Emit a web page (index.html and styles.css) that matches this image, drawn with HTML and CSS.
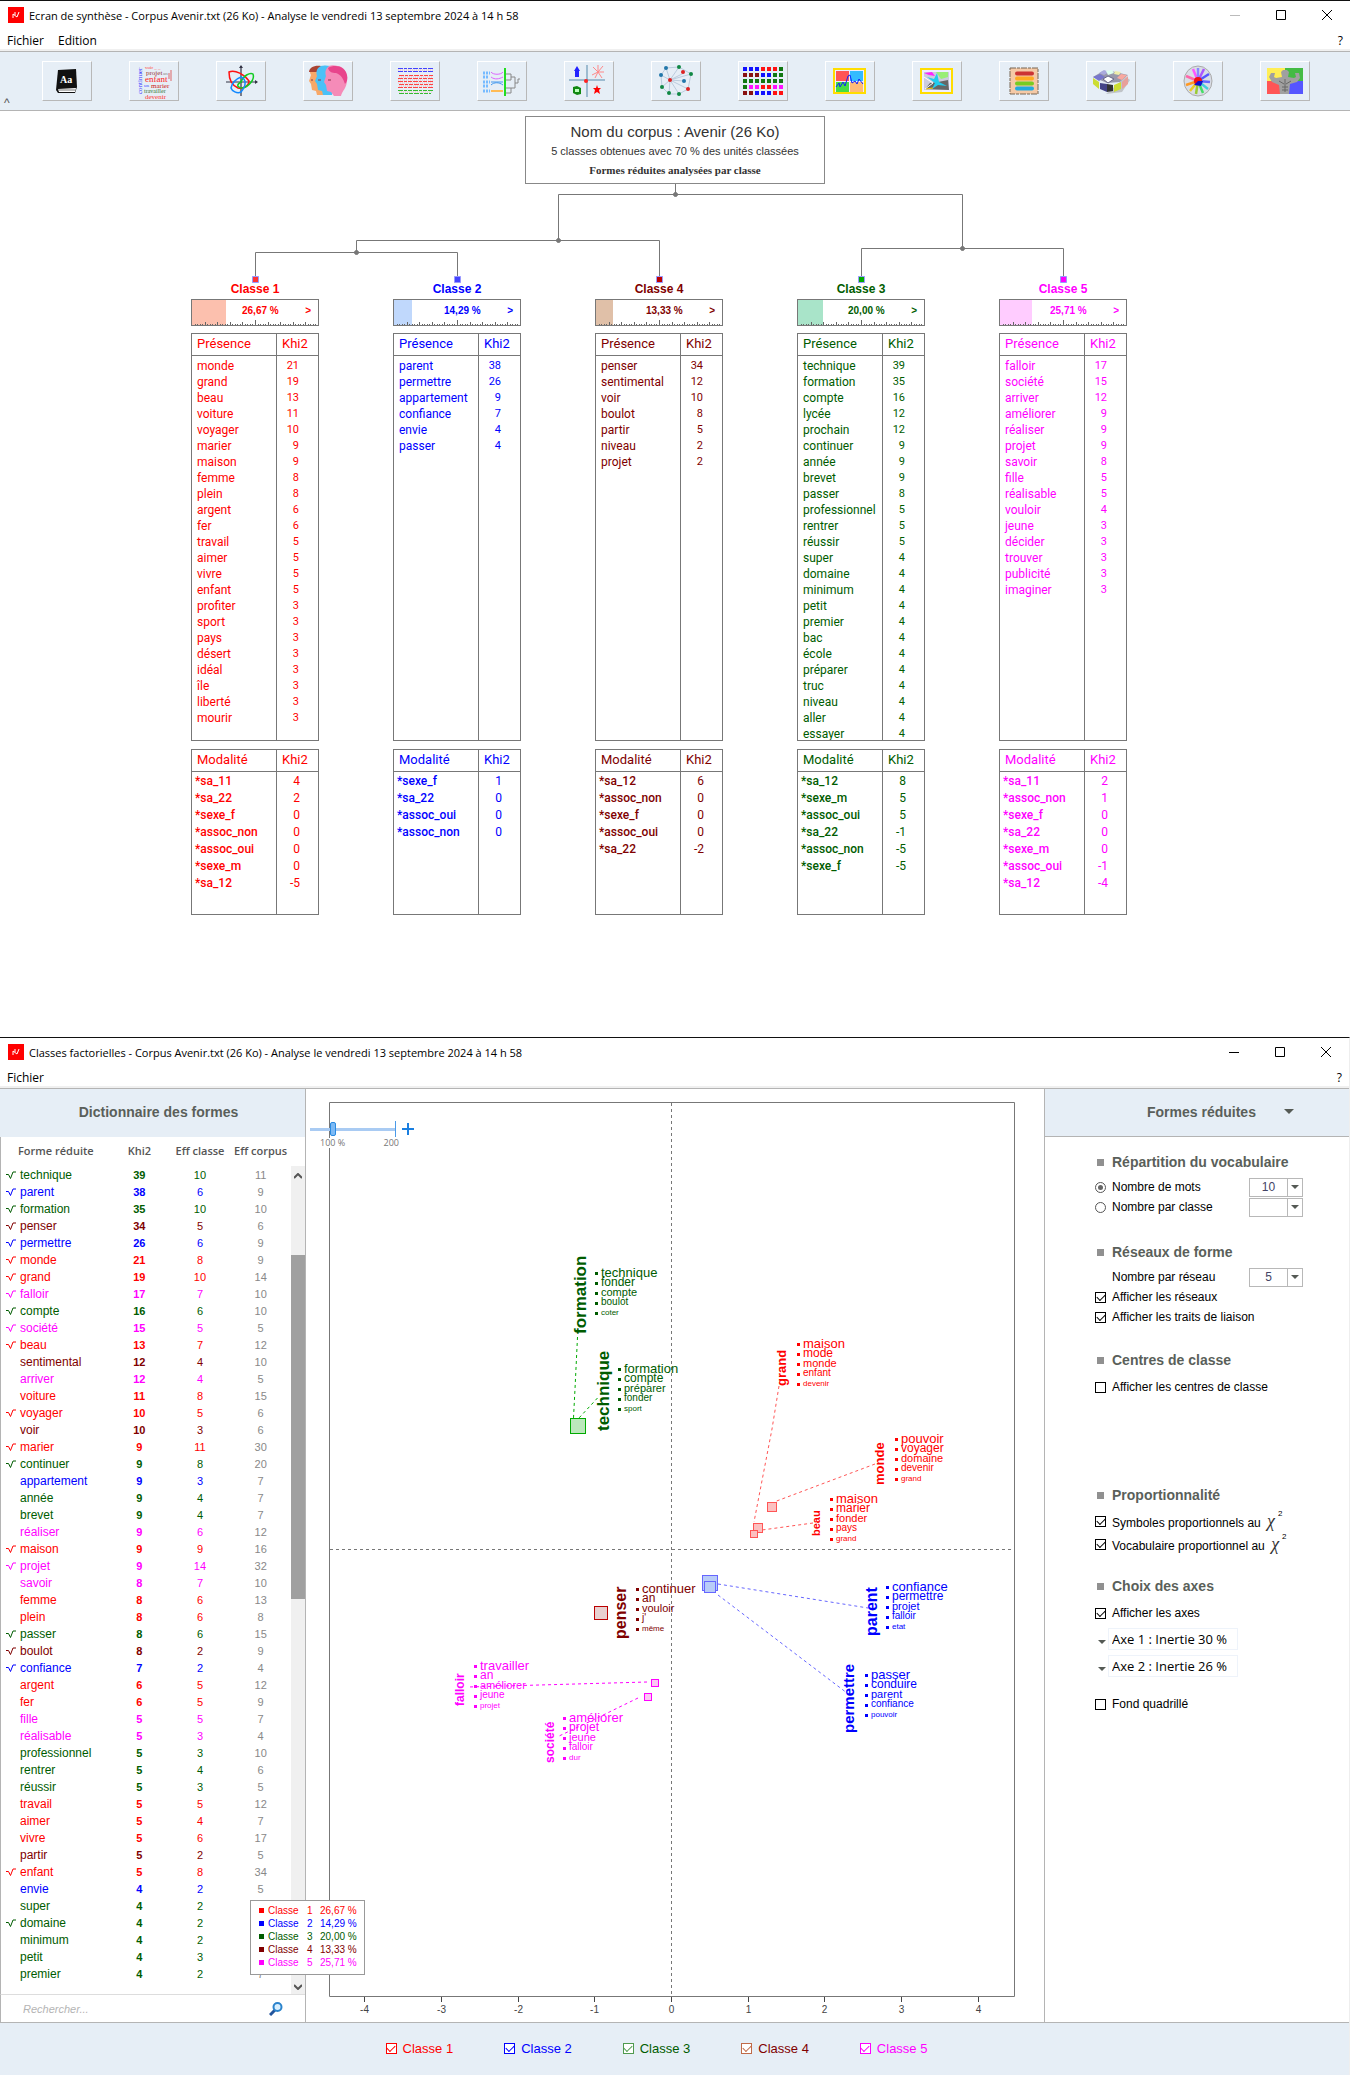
FILE: index.html
```html
<!DOCTYPE html>
<html lang="fr">
<head>
    <meta charset="UTF-8">
    <meta name="viewport" content="width=device-width, initial-scale=1.0">
    <title>Ecran de synthèse - Corpus Avenir</title>
    <link rel="stylesheet" href="styles.css">
</head>
<body>

    <section class="window synthese">
        <header class="titlebar">
            <svg class="logo" width="16" height="16"><rect width="16" height="16" fill="#f00"/><path d="M5 11V7l4 3 2-5M7 5v3" fill="none" stroke="#fff"/></svg>
            <h1>Ecran de synthèse - Corpus Avenir.txt (26 Ko) - Analyse le vendredi 13 septembre 2024 à 14 h 58</h1>
            <div class="controls">
                <button class="off" aria-label="Réduire"><svg width="10" height="10"><path d="M0 5.500h10" stroke="currentColor"/></svg></button>
                <button aria-label="Agrandir"><svg width="10" height="10"><path d="M.5.500h9v9h-9z" fill="none" stroke="currentColor"/></svg></button>
                <button aria-label="Fermer"><svg width="10" height="10"><path d="M0 0l10 10M10 0L0 10" stroke="currentColor"/></svg></button>
            </div>
        </header>
        <nav class="menu">
            <button>Fichier</button>
            <button>Edition</button>
            <button class="help">?</button>
        </nav>

        <div class="toolbar">
            <button class="collapse" aria-label="Replier">^</button>
            <!-- dictionnaire -->
            <button class="tool" aria-label="Dictionnaire"><svg viewBox="0 0 40 32">
                <path d="M11 5l18-1 1 18-2 6H11l-2-3z" fill="#111"/><path d="M11 24l18-1-1 4H12z" fill="#fff"/><path d="M11 25h17" stroke="#777"/>
                <text x="13" y="18" font-family="Liberation Serif" font-weight="bold" font-size="10" fill="#fff">Aa</text></svg></button>
            <!-- nuage de mots -->
            <button class="tool" aria-label="Nuage de mots"><svg viewBox="0 0 40 32" font-family="Liberation Serif" font-size="7">
                <text x="11" y="4" font-size="5" fill="#f33">voir _ _</text>
                <text x="12" y="10" fill="#933">projet</text><text x="29" y="10" font-size="5" fill="#888">an</text>
                <text x="11" y="17" font-size="9" fill="#f22">enfant</text>
                <text x="10" y="22" font-size="5" fill="#44f">un</text><text x="17" y="23" fill="#c22">marier</text>
                <text x="10" y="28" font-size="6" fill="#373">travailler</text>
                <text x="11" y="34" fill="#f33">devenir</text>
                <text transform="translate(8 29) rotate(-90)" fill="#33f">continuer</text>
                <path d="M37 5v11M35 8v6" stroke="#d66"/></svg></button>
            <!-- analyse factorielle -->
            <button class="tool" aria-label="Analyse factorielle"><svg viewBox="0 0 40 32" fill="none" stroke-width="1.500">
                <path d="M20 1v30M5 17h31" stroke="#334" stroke-width="1.200"/><path d="M18 3l2-3 2 3zM34 15l3 2-3 2z" fill="#334"/>
                <path d="M8 7c6-3 16 3 20 9 0 5-6 8-11 7C10 20 8 14 8 7z" stroke="#f11"/>
                <path d="M20 17c2-6 9-10 12-8 2 5-4 13-11 14-6-1-5-4-1-6z" stroke="#1c2"/>
                <path d="M20 12c5 2 6 8 0 15-4 2-9-1-10-4 1-5 5-9 10-11z" stroke="#18f"/></svg></button>
            <!-- profils -->
            <button class="tool" aria-label="Profils"><svg viewBox="0 0 40 32">
                <path d="M6 2c-4 1-5 5-3 8l-2 6 2 3 1 6 4 1 1 4h8l3-26C16 1 10 1 6 2z" fill="#f8a868"/><path d="M1 7c0-4 5-7 12-6l-2 6z" fill="#a43"/>
                <path d="M13 1c-5 2-5 7-4 10l-2 5 2 3 1 6 4 1 1 4h9l3-27c-4-3-11-3-14-2z" fill="#4ac1f7"/>
                <path d="M21 1c-4 3-4 7-3 10l-2 6 2 3 1 6 4 1 3 4h7c1-5 6-8 6-16 0-8-3-13-9-14-4-1-7-1-9 0z" fill="#f58bb8"/>
                <path d="M20 3c7-4 17-2 19 7 1 4 0 7-2 9-2-6-4-9-9-11-4 0-7-1-8-5z" fill="#e8458c"/><path d="M20 15h3M10 15h3M3 15h2" stroke="#834"/></svg></button>
            <!-- texte colorisé -->
            <button class="tool" aria-label="Concordancier"><svg viewBox="0 0 40 32" stroke-dasharray="5 1 3 1 4 1">
                <path d="M3 3.500h35M3 6.500h35" stroke="#44f"/>
                <path d="M4 10.500h34M3 13.500h35M3 16.500h35M4 19.500h34M3 22.500h35" stroke="#f44"/>
                <path d="M3 25.500h35M4 28.500h32" stroke="#3b3"/>
                <path d="M3 5h35M4 12h34M3 15h35M3 18h35M4 21h34M4 27h34" stroke="#f99" stroke-dasharray="1 1" opacity=".6"/></svg></button>
            <!-- arbre -->
            <button class="tool" aria-label="Arbre"><svg viewBox="0 0 40 32" fill="none">
                <path d="M1 8h7M1 12h6M1 17h7M1 21h6M1 26h7" stroke="#7bf" stroke-width="3" stroke-dasharray="2 1"/>
                <path d="M9 7c2 3 10 3 12 0M9 12c4 3 8 2 12 0" stroke="#d6f"/><path d="M9 17h12M9 20c3-3 8-3 12 0" stroke="#49e"/><path d="M9 26h12" stroke="#fb5" stroke-width="2"/>
                <path d="M23 3v28" stroke="#2d2" stroke-width="2"/>
                <path d="M24 9h5v6h-5M29 12h4v11h-9M33 18h3v-4h2M29 23v5h-5" stroke="#888"/></svg></button>
            <!-- correspondances -->
            <button class="tool" aria-label="Correspondances"><svg viewBox="0 0 40 32">
                <path d="M18 0v32M0 15h36" stroke="#58a"/><path d="M6 12V6H5l3-5 3 5h-1v6z" fill="#22f"/>
                <path d="M29 7l-5-5M29 7l5-6M29 7h6M29 7l-6 3M29 7l4 6M29 7l-3 6M29 7V0" stroke="#f88"/>
                <path d="M4 22l4-1 4 2v6l-4 1-4-2z" fill="#181"/><path d="M6 24h4v3H6z" fill="#bfb"/>
                <path d="M28 20l1 3h3l-2 2 1 4-3-2-3 2 1-4-2-2h3z" fill="#f00"/><circle cx="17" cy="16" r="2" fill="#f22"/></svg></button>
            <!-- réseau -->
            <button class="tool" aria-label="Réseau"><svg viewBox="0 0 40 32">
                <path d="M14 15L5 10M14 15L10 3M14 15L23 2M14 15L35 9M14 15L32 24M14 15L23 29M14 15L13 29M14 15L6 22M28 8L14 15M28 16L14 15M10 3l13-1 12 7-3 15-9 5-10 0-7-7-1-12z" fill="none" stroke="#bcd"/>
                <g fill="#184"><circle cx="23" cy="2" r="2"/><circle cx="35" cy="9" r="2"/><circle cx="23" cy="29" r="2"/><circle cx="6" cy="22" r="2"/><circle cx="13" cy="28" r="2"/></g>
                <g fill="#27a"><circle cx="10" cy="3" r="2"/><circle cx="5" cy="10" r="2"/><circle cx="28" cy="16" r="2"/></g>
                <g fill="#d22"><circle cx="14" cy="15" r="2"/><circle cx="27" cy="7" r="2"/><circle cx="32" cy="24" r="2"/></g></svg></button>
            <!-- mosaïque -->
            <button class="tool" aria-label="Mosaïque"><svg viewBox="0 0 40 32" stroke-width="4" stroke-dasharray="4 2">
                <path d="M0 4h17" stroke="#11f"/><path d="M18 4h17" stroke="#f11"/><path d="M36 4h4" stroke="#171"/>
                <path d="M0 10h17" stroke="#811"/><path d="M18 10h11" stroke="#11f"/><path d="M30 10h10" stroke="#171"/>
                <path d="M0 16h40" stroke="#171"/>
                <path d="M0 22h4" stroke="#171"/><path d="M6 22h11M30 22h10" stroke="#f1f"/><path d="M18 22h11" stroke="#f11"/>
                <path d="M0 28h11" stroke="#811"/><path d="M12 28h17" stroke="#11f"/><path d="M30 28h10" stroke="#f11"/></svg></button>
            <!-- chronologie -->
            <button class="tool" aria-label="Chronologie"><svg viewBox="0 0 40 32">
                <path d="M4 4h31v24H4z" fill="#eef" stroke="#fd0" stroke-width="2"/><path d="M6 6h13v10H6z" fill="#f55"/><path d="M20 6h13v10H20z" fill="#3bf"/><path d="M6 17h13v10H6z" fill="#4d4"/><path d="M20 17h13v10H20z" fill="#fb7"/>
                <path d="M6 22l3-4 1 4 3-5 2 4 3-10 2-1 2 8 3-2 2 3 2-5 4 5" fill="none" stroke="#12f"/></svg></button>
            <!-- carte -->
            <button class="tool" aria-label="Carte"><svg viewBox="0 0 40 32">
                <path d="M4 4h31v24H4z" fill="#eef" stroke="#fd0" stroke-width="2"/><path d="M7 7h25v18H7z" fill="#ccd"/><path d="M7 8l8-1 3 4-6-1z" fill="#f2f"/><path d="M19 7h12v5l-7 2z" fill="#9e7"/><path d="M8 24l5-6 8-1 10-2 1 10z" fill="#666"/><path d="M20 8l2 9 8 4-9-1-6 4 3-6-8-6 7 2z" fill="#2ce"/><path d="M9 24l7-1" stroke="#fc0"/><path d="M7 12l9 6-8 6" fill="none" stroke="#fff"/></svg></button>
            <!-- parchemin -->
            <button class="tool" aria-label="Segments"><svg viewBox="0 0 40 32">
                <path d="M6 3h28v26H6z" fill="#f5c9a6"/><path d="M6 3h28v26H6z" fill="none" stroke="#765" stroke-dasharray="6 1 3 1"/><g stroke-width="4" stroke-linecap="round"><path d="M13 8.500h15" stroke="#c33"/><path d="M13 13.500h15" stroke="#fa2"/><path d="M13 18.500h15" stroke="#7c2"/><path d="M13 23.500h15" stroke="#2ad"/></g></svg></button>
            <!-- cubes -->
            <button class="tool" aria-label="Tri croisé"><svg viewBox="0 0 40 32">
                <path d="M15 29l16-2 8-12-4-3z" fill="#999" opacity=".5"/>
                <path d="M2 12l10-6 4 2 4-2 17 4-8 7-13 1z" fill="#99a"/><path d="M2 12l7-3 5 3-6 4z" fill="#77c"/><path d="M8 8l5-3 5 2-5 3z" fill="#aad"/><path d="M15 6l6-1 2 3-6 2z" fill="#dfe"/><path d="M24 6l6 1-2 3-5-1z" fill="#eea"/><path d="M30 9l6 1-5 5-5-2z" fill="#f9a9a0"/>
                <path d="M2 13l6 4v7l-6-5zM23 20l7-3v7l-7 3z" fill="#cd3"/><path d="M9 18l7 1v8l-7-3z" fill="#448"/><path d="M16 19l6 1v6l-6 1z" fill="#333"/><path d="M31 17l6-6v8l-6 5z" fill="#e8a09a"/><path d="M12 14l5-3 6 3-6 4z" fill="#fff" stroke="#668"/></svg></button>
            <!-- disque -->
            <button class="tool" aria-label="Disque"><svg viewBox="0 0 40 32">
                <ellipse cx="20" cy="16" rx="14" ry="15" fill="#d9dde6" stroke="#aaa"/>
                <g stroke-width="2.500"><path d="M20 16L15 4" stroke="#f5f"/><path d="M20 16V3" stroke="#88f"/><path d="M20 16l6-12" stroke="#a5f"/><path d="M20 16l11-7" stroke="#55f"/><path d="M20 16l12 1" stroke="#66f"/><path d="M20 16l10 8" stroke="#4cd"/><path d="M20 16l5 12" stroke="#4d6"/><path d="M20 16l-2 13" stroke="#9c3"/><path d="M20 16l-8 10" stroke="#ec2"/><path d="M20 16L8 20" stroke="#f92"/><path d="M20 16L8 11" stroke="#f6a"/></g>
                <circle cx="20" cy="16" r="4" fill="#e11"/><path d="M20 16h5l-2 5-7-1z" fill="#11c"/></svg></button>
            <!-- athlète -->
            <button class="tool" aria-label="Poids"><svg viewBox="0 0 40 32">
                <path d="M2 3h18v13H2z" fill="#fe5"/><path d="M20 3h18v13H20z" fill="#4b4"/><path d="M2 16h18v13H2z" fill="#f55"/><path d="M20 16h18v13H20z" fill="#55f"/>
                <path d="M6 8l4 0-1 4 2 1 6-1-1-5 2-2h4l2 2-1 5 6 1 2-1-1-4 4 0 1 5-3 4-7 2-1 10h-9l-1-9-7-3-3-5z" fill="#a0a0a0"/><path d="M20 14v13M14 16l5 3M26 16l-5 3M17 22h6M17 25h6" stroke="#666"/></svg></button>
        </div>

        <main class="synthese-body">
            <div class="corpus">
                <p class="corpus-name">Nom du corpus : Avenir (26 Ko)</p>
                <p class="corpus-info">5 classes obtenues avec 70 % des unités classées</p>
                <p class="corpus-mode">Formes réduites analysées par classe</p>
            </div>
            <div class="tree">
                <svg class="branches" width="936" height="100" fill="none" stroke="#777">
                    <path d="M484.500 0V10.500M367.500 56V10.500H771.500V64M165.500 68V56.500H468.500V92M64.500 92V68.500H266.500V92M670.500 92V64.500H872.500V92"/>
                    <g fill="#777"><circle cx="484.500" cy="10.500" r="2"/><circle cx="367.500" cy="56.500" r="2"/><circle cx="165.500" cy="68.500" r="2"/><circle cx="771.500" cy="64.500" r="2"/></g>
                    <g stroke="#99f"><path fill="#f33" d="M61.500 92.500h6v6h-6z"/><path fill="#44f" d="M263.500 92.500h6v6h-6z"/><path fill="#b00" d="M465.500 92.500h6v6h-6z"/><path fill="#0a0" d="M667.500 92.500h6v6h-6z"/><path fill="#f0f" d="M869.500 92.500h6v6h-6z"/></g>
                </svg>
                <div class="classes" id="classes"></div>
            </div>
        </main>
    </section>

    <section class="window factorielle">
        <header class="titlebar">
            <svg class="logo" width="16" height="16"><rect width="16" height="16" fill="#f00"/><path d="M5 11V7l4 3 2-5M7 5v3" fill="none" stroke="#fff"/></svg>
            <h1>Classes factorielles - Corpus Avenir.txt (26 Ko) - Analyse le vendredi 13 septembre 2024 à 14 h 58</h1>
            <div class="controls">
                <button aria-label="Réduire"><svg width="10" height="10"><path d="M0 5.500h10" stroke="currentColor"/></svg></button>
                <button aria-label="Agrandir"><svg width="10" height="10"><path d="M.5.500h9v9h-9z" fill="none" stroke="currentColor"/></svg></button>
                <button aria-label="Fermer"><svg width="10" height="10"><path d="M0 0l10 10M10 0L0 10" stroke="currentColor"/></svg></button>
            </div>
        </header>
        <nav class="menu">
            <button>Fichier</button>
            <button class="help">?</button>
        </nav>

        <div class="panels">
            <aside class="dico">
                <h2>Dictionnaire des formes</h2>
                <div class="dico-body">
                    <table class="dico-table">
                        <thead><tr><th>Forme réduite</th><th>Khi2</th><th>Eff classe</th><th>Eff corpus</th></tr></thead>
                        <tbody id="formes"></tbody>
                    </table>
                    <div class="scrollbar">
                        <svg width="8" height="6"><path d="M0 5l4-4 4 4" fill="none" stroke="#555" stroke-width="2"/></svg>
                        <div class="thumb"></div>
                        <svg width="8" height="6"><path d="M0 1l4 4 4-4" fill="none" stroke="#555" stroke-width="2"/></svg>
                    </div>
                </div>
                <div class="search">
                    <input type="text" placeholder="Rechercher..." aria-label="Rechercher">
                    <svg width="14" height="14"><path d="M1 13l5-5" stroke="#23559c" stroke-width="3"/><circle cx="8.500" cy="5" r="4" fill="#d8efff" stroke="#2a83cc" stroke-width="2"/></svg>
                </div>
            </aside>

            <div class="plan">
                <svg id="plan" width="738" height="933"></svg>
                <div class="zoom">
                    <div class="zoom-line">
                        <input type="range" min="65" max="200" value="100" aria-label="Zoom">
                        <svg width="12" height="12"><path d="M6 0v12M0 6h12" stroke="#1a7fe0" stroke-width="2"/></svg>
                    </div>
                    <div class="zoom-text"><span>100 %</span><span>200</span></div>
                </div>
            </div>

            <aside class="options">
                <div class="options-head">
                    <select aria-label="Type de formes"><option>Formes réduites</option></select>
                    <i class="arrow"></i>
                </div>
                <form>
                    <fieldset>
                        <h3>Répartition du vocabulaire</h3>
                        <div class="row">
                            <input type="radio" name="rep" id="mots" checked><label for="mots">Nombre de mots</label>
                            <span class="combo"><select aria-label="Nombre de mots"><option>10</option></select><i class="arrow"></i></span>
                        </div>
                        <div class="row">
                            <input type="radio" name="rep" id="parclasse"><label for="parclasse">Nombre par classe</label>
                            <span class="combo"><select aria-label="Nombre par classe"><option></option></select><i class="arrow"></i></span>
                        </div>
                    </fieldset>
                    <fieldset>
                        <h3>Réseaux de forme</h3>
                        <div class="row indent">
                            <label for="reseau">Nombre par réseau</label>
                            <span class="combo"><select id="reseau"><option>5</option></select><i class="arrow"></i></span>
                        </div>
                        <div class="row"><input type="checkbox" id="reseaux" checked><label for="reseaux">Afficher les réseaux</label></div>
                        <div class="row"><input type="checkbox" id="traits" checked><label for="traits">Afficher les traits de liaison</label></div>
                    </fieldset>
                    <fieldset class="centres">
                        <h3>Centres de classe</h3>
                        <div class="row"><input type="checkbox" id="centres"><label for="centres">Afficher les centres de classe</label></div>
                    </fieldset>
                    <fieldset class="proportion">
                        <h3>Proportionnalité</h3>
                        <div class="row"><input type="checkbox" id="symb" checked><label for="symb">Symboles proportionnels au <em>χ</em><sup>2</sup></label></div>
                        <div class="row"><input type="checkbox" id="voc" checked><label for="voc">Vocabulaire proportionnel au <em>χ</em><sup>2</sup></label></div>
                    </fieldset>
                    <fieldset class="axes">
                        <h3>Choix des axes</h3>
                        <div class="row"><input type="checkbox" id="axes" checked><label for="axes">Afficher les axes</label></div>
                        <div class="axe"><i class="arrow"></i><select aria-label="Axe horizontal"><option>Axe 1 : Inertie 30 %</option></select></div>
                        <div class="axe"><i class="arrow"></i><select aria-label="Axe vertical"><option>Axe 2 : Inertie 26 %</option></select></div>
                    </fieldset>
                    <fieldset class="fond">
                        <div class="row"><input type="checkbox" id="fond"><label for="fond">Fond quadrillé</label></div>
                    </fieldset>
                </form>
            </aside>

            <div class="legend" id="legend"></div>
        </div>

        <footer class="filters">
            <label class="c1"><input type="checkbox" checked>Classe 1</label>
            <label class="c2"><input type="checkbox" checked>Classe 2</label>
            <label class="c3"><input type="checkbox" checked>Classe 3</label>
            <label class="c4"><input type="checkbox" checked>Classe 4</label>
            <label class="c5"><input type="checkbox" checked>Classe 5</label>
        </footer>
    </section>

    <script src="script.js"></script>
</body>
</html>
```
FILE: styles.css
```css
* {
    box-sizing: border-box;
}

body {
    margin: 0;
    background: #fff;
    color: #000;
    font-family: "Liberation Sans", Arial, sans-serif;
    font-size: 12px;
}

h1, h2, h3, p {
    margin: 0;
}

button, select, input {
    font: inherit;
    color: inherit;
    margin: 0;
}

.c1 { color: #ff0000; }
.c2 { color: #0000ff; }
.c3 { color: #005c00; }
.c4 { color: #800000; }
.c5 { color: #ff00ff; }

/* fenêtres */
.window {
    border-top: 1px solid #111;
}

.titlebar {
    display: flex;
    align-items: center;
    height: 28px;
    padding-left: 8px;
}

.titlebar h1 {
    flex: 1;
    margin-left: 5px;
    font: 11px "Open Sans", sans-serif;
}

.controls {
    display: flex;
}

.controls button {
    width: 46px;
    height: 28px;
    padding: 0;
    border: none;
    background: none;
}

.controls svg {
    display: block;
    margin: auto;
}

.controls .off {
    color: #bbb;
}

.menu {
    display: flex;
    gap: 14px;
    height: 22px;
    padding: 3px 7px 0;
    border-bottom: 2px solid #f0f0f0;
}

.menu button {
    padding: 0;
    border: none;
    background: none;
    font: 12px/17px "Open Sans", sans-serif;
}

.menu .help {
    margin-left: auto;
}

.toolbar {
    position: relative;
    display: flex;
    justify-content: space-between;
    align-items: center;
    height: 60px;
    padding: 0 40px 0 42px;
    background: #e6eef6;
    border-top: 1px solid #b4b4b4;
    border-bottom: 1px solid #b4b4b4;
}

.collapse {
    position: absolute;
    left: 4px;
    bottom: 0;
    padding: 0;
    border: none;
    background: none;
    color: #555;
}

.tool {
    width: 50px;
    height: 40px;
    padding: 0;
    background: #e6eef6;
    border: 1px solid;
    border-color: #fff #b8b8b8 #b8b8b8 #fff;
}

.tool svg {
    display: block;
    width: 40px;
    height: 32px;
    margin: auto;
    overflow: visible;
}

/* dendrogramme */
.synthese-body {
    padding: 5px 0 122px;
}

.corpus {
    width: 300px;
    height: 68px;
    margin: 0 auto;
    padding-top: 5px;
    border: 1px solid #888;
    text-align: center;
    color: #333;
}

.corpus-name {
    font-size: 15px;
    line-height: 20px;
}

.corpus-info {
    font-size: 11px;
    line-height: 18px;
}

.corpus-mode {
    font: bold 11px/20px "Liberation Serif", serif;
}

.tree {
    width: 936px;
    margin: 0 auto;
    position: relative;
    right: 16px;
}

.branches {
    display: block;
}

.classes {
    display: flex;
    justify-content: space-between;
}

.classe {
    width: 128px;
}

.classe h2 {
    font-size: 12px;
    line-height: 10px;
    height: 15px;
    text-align: center;
}

.gauge {
    display: flex;
    align-items: center;
    justify-content: space-between;
    position: relative;
    height: 27px;
    margin-bottom: 7px;
    padding: 0 7px 4px 50px;
    border: 1px solid #777;
    font-size: 10px;
    font-weight: bold;
}

.gauge .part {
    position: absolute;
    left: 0;
    top: 0;
    bottom: 0;
}

.gauge .ticks {
    position: absolute;
    left: 0;
    bottom: 0;
}

.gauge b {
    position: relative;
}

.c1 .part { background: #fcc0ae; }
.c2 .part { background: #c0d8fc; }
.c3 .part { background: #a9e4c9; }
.c4 .part { background: #e0c0a8; }
.c5 .part { background: #ffccff; }

.box {
    height: 408px;
    margin-bottom: 8px;
    border: 1px solid #777;
    overflow: hidden;
    background: linear-gradient(#777, #777) 84px 0 / 1px 100% no-repeat;
}

.box table {
    width: 100%;
    table-layout: fixed;
    border-spacing: 0;
    font-family: Roboto, sans-serif;
}

.box th {
    height: 22px;
    padding: 0 0 2px 5px;
    border-bottom: 1px solid #777;
    font-size: 13px;
    font-weight: normal;
    line-height: 16px;
    text-align: left;
}

.box th:last-child {
    width: 41px;
    padding-left: 5px;
}

.box td {
    padding: 0 0 0 5px;
    line-height: 16px;
    white-space: nowrap;
}

.box td:last-child {
    padding: 0 19px 0 0;
    font-size: 11px;
    text-align: right;
}

.box tbody::before {
    content: "";
    display: block;
    height: 2px;
}

.box.modalite {
    height: 166px;
    margin: 0;
}

.modalite tbody::before {
    height: 1px;
}

.modalite td {
    padding-left: 3px;
    line-height: 17px;
    font-weight: 500;
}

.modalite td:last-child {
    padding-right: 18px;
    font-size: 12px;
    font-weight: normal;
}

/* plan factoriel */
.factorielle {
    border-right: 1px solid #eee;
}

.panels {
    display: grid;
    grid-template-columns: 306px 1fr 305px;
    position: relative;
    border-top: 1px solid #b4b4b4;
}

.dico {
    display: flex;
    flex-direction: column;
    border-right: 1px solid #b4b4b4;
}

.dico h2 {
    height: 48px;
    padding-left: 12px;
    background: #e6eef6;
    color: #5a5f5a;
    font-size: 14px;
    line-height: 47px;
    text-align: center;
}

.dico-body {
    display: flex;
    flex: 1;
    border-left: 1px solid #b4b4b4;
}

.dico-table {
    width: 290px;
    table-layout: fixed;
    border-spacing: 0;
    align-self: flex-start;
}

.dico-table th {
    height: 30px;
    padding: 0 0 3px;
    color: #555;
    font: 600 11px "Open Sans", sans-serif;
}

.dico-table th:first-child {
    width: 108px;
    padding-left: 17px;
    text-align: left;
}

.dico-table td {
    height: 17px;
    padding: 0;
    font-size: 11px;
    line-height: 17px;
    text-align: center;
}

.dico-table td:first-child {
    padding-left: 19px;
    font-size: 12px;
    text-align: left;
}

.dico-table td.marked {
    padding-left: 5px;
}

.dico-table svg {
    margin-right: 4px;
}

.dico-table td:nth-child(2) {
    font-weight: bold;
}

.dico-table td:last-child {
    color: #888;
}

.scrollbar {
    display: flex;
    flex-direction: column;
    justify-content: space-between;
    align-items: center;
    flex: 1;
    margin-top: 29px;
    padding: 7px 0 4px;
    background: #f0f0f0;
}

.thumb {
    width: 100%;
    height: 344px;
    margin: 76px 0 auto;
    background: #a0a0a0;
}

.search {
    display: flex;
    align-items: center;
    height: 28px;
    padding: 0 22px;
    border-left: 1px solid #b4b4b4;
    border-top: 1px solid #ddd;
}

.search input {
    flex: 1;
    min-width: 0;
    padding: 0;
    border: none;
    font-size: 11px;
    font-style: italic;
}

.search input::placeholder {
    color: #b4b4b4;
}

.plan {
    position: relative;
}

.plan > svg {
    display: block;
    width: 100%;
}

/* curseur de zoom posé sur le cadre */
.zoom {
    position: absolute;
    left: 4px;
    top: 31px;
    width: 104px;
}

.zoom-line {
    display: flex;
    align-items: center;
    gap: 6px;
    height: 18px;
}

.zoom input {
    flex: 1;
    min-width: 0;
    height: 16px;
    appearance: none;
    border-right: 1px solid #4a9ae8;
    background: linear-gradient(#a9cbf3, #a9cbf3) 0 50% / 100% 3px no-repeat;
}

.zoom input::-webkit-slider-thumb {
    appearance: none;
    width: 6px;
    height: 14px;
    border: 1px solid #2a8ae0;
    border-radius: 2px;
    background: #7dbaf5;
}

.zoom-text {
    display: flex;
    justify-content: space-between;
    padding: 0 15px 0 10px;
    color: #777;
    font: 9px/10px "Open Sans", sans-serif;
}

.zoom-text span {
    background: #fff;
}

/* options */
.options {
    border-left: 1px solid #b4b4b4;
}

.arrow {
    border: 5px solid transparent;
    border-top-color: #555a55;
    border-bottom: none;
}

.options-head {
    display: flex;
    align-items: center;
    gap: 28px;
    height: 48px;
    padding: 0 0 2px 102px;
    background: #e6eef6;
    border-bottom: 1px solid #b4b4b4;
}

.options select {
    appearance: none;
    border: none;
    padding: 0;
    background: none;
}

.options-head select {
    color: #5a5f5a;
    font-size: 14px;
    font-weight: bold;
}

.options form {
    padding: 15px 46px 0 50px;
}

fieldset {
    margin: 0 0 25px;
    padding: 0;
    border: none;
}

.options h3 {
    display: flex;
    align-items: center;
    gap: 8px;
    margin-bottom: 5px;
    padding-left: 2px;
    color: #5a5f5a;
    font-size: 14px;
    line-height: 20px;
}

.options h3::before {
    content: "";
    width: 7px;
    height: 7px;
    background: #909090;
}

.row {
    display: flex;
    align-items: center;
    gap: 6px;
    height: 20px;
}

.indent {
    padding-left: 17px;
}

input[type="checkbox"], input[type="radio"] {
    display: grid;
    place-content: center;
    flex: none;
    width: 11px;
    height: 11px;
    appearance: none;
    border: 1px solid currentColor;
    background: #fff;
}

input[type="checkbox"]:checked::after {
    content: "";
    width: 7px;
    height: 4px;
    margin-bottom: 2px;
    border: solid currentColor;
    border-width: 0 0 1px 1px;
    transform: rotate(-45deg);
}

input[type="radio"] {
    border-color: #555;
    border-radius: 50%;
}

input[type="radio"]:checked::after {
    content: "";
    width: 5px;
    height: 5px;
    border-radius: 50%;
    background: #666;
}

.combo {
    display: flex;
    align-items: center;
    width: 54px;
    height: 19px;
    margin-left: auto;
    border: 1px solid #b8b8b8;
}

.combo select {
    width: 38px;
    height: 17px;
    border-right: 1px solid #b8b8b8;
    color: #446;
    text-align: center;
    text-align-last: center;
}

.combo .arrow, .axe .arrow {
    margin: 0 auto;
    border-width: 4px 4px 0;
}

.centres {
    margin-top: -2px;
    margin-bottom: 88px;
}

.centres h3, .axes h3 {
    margin-bottom: 7px;
}

.proportion {
    margin-bottom: 20px;
}

.proportion .row {
    height: 23px;
}

.proportion em {
    margin-left: 3px;
    color: #333;
    font: italic 18px/12px "Liberation Serif", serif;
}

.proportion sup {
    margin-left: 3px;
    font-size: 8px;
    line-height: 0;
    vertical-align: 11px;
}

.axes {
    margin-bottom: 17px;
}

.axe {
    display: flex;
    align-items: center;
    height: 22px;
    margin-top: 5px;
}

.axe .arrow {
    margin: 5px 2px 0 3px;
}

.axe select {
    width: 130px;
    height: 22px;
    padding-left: 3px;
    border: 1px solid #eef3fa;
    font-family: "Open Sans", sans-serif;
    font-size: 13px;
}

.legend {
    position: absolute;
    left: 250px;
    top: 811px;
    width: 115px;
    height: 75px;
    padding: 3px 8px;
    border: 1px solid #999;
    background: #fff;
    font-size: 10px;
    white-space: nowrap;
}

.legend div {
    display: grid;
    grid-template-columns: 9px 39px 13px 36px;
    align-items: center;
    height: 13px;
}

.legend i {
    width: 5px;
    height: 5px;
    background: currentColor;
}

.filters {
    display: flex;
    justify-content: center;
    gap: 51px;
    height: 53px;
    padding: 0 36px 2px 0;
    background: #e6eef6;
    border-top: 1px solid #b4b4b4;
    font-size: 13px;
}

.filters label {
    display: flex;
    align-items: center;
    gap: 6px;
}

.filters .c3 input { color: #4f9a4f; }
.filters .c4 input { color: #c06a48; }
```
FILE: script.js
```
// Classes dans l'ordre de l'arbre
const classes = [
    { n: 1, pct: "26,67", presence: "monde 21,grand 19,beau 13,voiture 11,voyager 10,marier 9,maison 9,femme 8,plein 8,argent 6,fer 6,travail 5,aimer 5,vivre 5,enfant 5,profiter 3,sport 3,pays 3,désert 3,idéal 3,île 3,liberté 3,mourir 3",
      modalite: "*sa_11 4,*sa_22 2,*sexe_f 0,*assoc_non 0,*assoc_oui 0,*sexe_m 0,*sa_12 -5" },
    { n: 2, pct: "14,29", presence: "parent 38,permettre 26,appartement 9,confiance 7,envie 4,passer 4",
      modalite: "*sexe_f 1,*sa_22 0,*assoc_oui 0,*assoc_non 0" },
    { n: 4, pct: "13,33", presence: "penser 34,sentimental 12,voir 10,boulot 8,partir 5,niveau 2,projet 2",
      modalite: "*sa_12 6,*assoc_non 0,*sexe_f 0,*assoc_oui 0,*sa_22 -2" },
    { n: 3, pct: "20,00", presence: "technique 39,formation 35,compte 16,lycée 12,prochain 12,continuer 9,année 9,brevet 9,passer 8,professionnel 5,rentrer 5,réussir 5,super 4,domaine 4,minimum 4,petit 4,premier 4,bac 4,école 4,préparer 4,truc 4,niveau 4,aller 4,essayer 4",
      modalite: "*sa_12 8,*sexe_m 5,*assoc_oui 5,*sa_22 -1,*assoc_non -5,*sexe_f -5" },
    { n: 5, pct: "25,71", presence: "falloir 17,société 15,arriver 12,améliorer 9,réaliser 9,projet 9,savoir 8,fille 5,réalisable 5,vouloir 4,jeune 3,décider 3,trouver 3,publicité 3,imaginer 3",
      modalite: "*sa_11 2,*assoc_non 1,*sexe_f 0,*sa_22 0,*sexe_m 0,*assoc_oui -1,*sa_12 -4" }
];

function box(type, title, list) {
    const rows = list.split(",").map(item => {
        const [mot, khi] = item.split(" ");
        return `<tr><td>${mot}</td><td>${khi}</td></tr>`;
    }).join("");
    return `<div class="box ${type}"><table><thead><tr><th>${title}</th><th>Khi2</th></tr></thead><tbody>${rows}</tbody></table></div>`;
}

// Graduations sous la jauge : une tous les 2 %, plus haute à 10 % et à 50 %
let ticks = "";
for (let i = 1; i < 50; i++) {
    const h = i === 25 ? 5 : i % 5 === 0 ? 3 : 1;
    ticks += `M${Math.round(i * 126 / 50) + 0.5} 5v-${h}`;
}

document.getElementById("classes").innerHTML = classes.map(c => `
    <div class="classe c${c.n}">
        <h2>Classe ${c.n}</h2>
        <div class="gauge">
            <div class="part" style="width: ${c.pct.replace(",", ".")}%"></div>
            <svg class="ticks" width="126" height="5"><path d="${ticks}" stroke="#666"/></svg>
            <b>${c.pct} %</b><b>&gt;</b>
        </div>
        ${box("presence", "Présence", c.presence)}
        ${box("modalite", "Modalité", c.modalite)}
    </div>`).join("");

// Dictionnaire : forme, classe, khi2, effectif classe, effectif corpus, √ si affichée sur le plan
const formes = `technique 3 39 10 11 √,parent 2 38 6 9 √,formation 3 35 10 10 √,penser 4 34 5 6 √,permettre 2 26 6 9 √,monde 1 21 8 9 √
grand 1 19 10 14 √,falloir 5 17 7 10 √,compte 3 16 6 10 √,société 5 15 5 5 √,beau 1 13 7 12 √,sentimental 4 12 4 10
arriver 5 12 4 5,voiture 1 11 8 15,voyager 1 10 5 6 √,voir 4 10 3 6,marier 1 9 11 30 √,continuer 3 9 8 20 √
appartement 2 9 3 7,année 3 9 4 7,brevet 3 9 4 7,réaliser 5 9 6 12,maison 1 9 9 16 √,projet 5 9 14 32 √
savoir 5 8 7 10,femme 1 8 6 13,plein 1 8 6 8,passer 3 8 6 15 √,boulot 4 8 2 9 √,confiance 2 7 2 4 √
argent 1 6 5 12,fer 1 6 5 9,fille 5 5 5 7,réalisable 5 5 3 4,professionnel 3 5 3 10,rentrer 3 5 4 6
réussir 3 5 3 5,travail 1 5 5 12,aimer 1 5 4 7,vivre 1 5 6 17,partir 4 5 2 5,enfant 1 5 8 34 √
envie 2 4 2 5,super 3 4 2 6,domaine 3 4 2 7 √,minimum 3 4 2 5,petit 3 4 3 9,premier 3 4 2 7`;

const coche = '<svg width="10" height="8"><path d="M0 3.500h2.500l2 4 2.500-6.500h3" fill="none" stroke="currentColor"/></svg>';

document.getElementById("formes").innerHTML = formes.split(/[,\n]/).map(item => {
    const [mot, n, khi, classe, corpus, vu] = item.split(" ");
    return `<tr class="c${n}"><td${vu ? ' class="marked"' : ""}>${vu ? coche : ""}${mot}</td><td>${khi}</td><td>${classe}</td><td>${corpus}</td></tr>`;
}).join("");

document.getElementById("legend").innerHTML = [...classes].sort((a, b) => a.n - b.n).map(c =>
    `<div class="c${c.n}"><i></i><span>Classe</span><span>${c.n}</span><span>${c.pct} %</span></div>`).join("");

// Plan factoriel : mot vertical (x, y de départ, corps) puis son réseau (x, y de la première puce)
const mots = [
    { mot: "formation", n: 3, x: 280, y: 245, size: 17, lx: 289, ly: 184, reseau: "technique fonder compte boulot coter" },
    { mot: "technique", n: 3, x: 303, y: 342, size: 17, lx: 312, ly: 280, reseau: "formation compte préparer fonder sport" },
    { mot: "grand", n: 1, x: 480, y: 297, size: 13, lx: 491, ly: 255, reseau: "maison mode monde enfant devenir" },
    { mot: "monde", n: 1, x: 578, y: 396, size: 13, lx: 589, ly: 350, reseau: "pouvoir voyager domaine devenir grand" },
    { mot: "beau", n: 1, x: 514, y: 447, size: 11, lx: 524, ly: 410, reseau: "maison marier fonder pays grand" },
    { mot: "penser", n: 4, x: 320, y: 550, size: 16, lx: 330, ly: 500, reseau: "continuer an vouloir j' même" },
    { mot: "parent", n: 2, x: 571, y: 547, size: 16, lx: 580, ly: 498, reseau: "confiance permettre projet falloir etat" },
    { mot: "permettre", n: 2, x: 548, y: 644, size: 15, lx: 559, ly: 586, reseau: "passer conduire parent confiance pouvoir" },
    { mot: "falloir", n: 5, x: 158, y: 617, size: 12, lx: 168, ly: 577, reseau: "travailler an améliorer jeune projet" },
    { mot: "société", n: 5, x: 248, y: 674, size: 12, lx: 257, ly: 629, reseau: "améliorer projet jeune falloir dur" }
];
const corps = [13, 12, 11, 10, 8];
const base = [4, 13, 23, 32, 42];

const traits = [
    ["#0a0", "M271.500 248L269 300 267.500 329M291.500 309L273 329"],
    ["#f55", "M473 297L466 340 448 433M569 375L468 413M507 434L456 441"],
    ["#66f", "M412 495L562 519M412 506L541 604"],
    ["#f0f", "M341 593L162 598M332 609L287 631 251 648"]
];
const symboles = [
    [264, 329, 15, "#0a0", "#bbe8bb"], [461, 413, 9, "#f55", "#fcc0c0"], [447, 434, 9, "#f55", "#fcc0c0"], [444, 441, 7, "#f55", "#fcc0c0"],
    [288, 517, 13, "#b00", "#e8d0d0"], [396, 486, 15, "#66f", "#b8ccf8"], [398, 492, 11, "#66f", "#b8ccf8"],
    [345, 590, 7, "#f0f", "#fcc8f4"], [338, 604, 7, "#f0f", "#fcc8f4"]
];

let plan = `<path d="M23.500 13.500H708.500V907.500H23.500z" fill="none" stroke="#777"/>
    <path d="M365.500 14V907M24 460.500H708" stroke="#777" stroke-dasharray="3 3"/>`;
for (let i = -4; i <= 4; i++) {
    const x = Math.round(365 + i * 76.7) + 0.5;
    plan += `<path d="M${x} 908v5" stroke="#444"/><text x="${x}" y="924" font-size="10" fill="#444" text-anchor="middle">${i}</text>`;
}
traits.forEach(([color, d]) => plan += `<path d="${d}" fill="none" stroke="${color}" stroke-dasharray="3 3"/>`);
symboles.forEach(([x, y, s, line, fill]) => plan += `<rect x="${x + 0.5}" y="${y + 0.5}" width="${s}" height="${s}" fill="${fill}" stroke="${line}"/>`);
mots.forEach(m => {
    plan += `<g class="c${m.n}" fill="currentColor"><text transform="translate(${m.x} ${m.y}) rotate(-90)" font-weight="bold" font-size="${m.size}">${m.mot}</text>`;
    m.reseau.split(" ").forEach((mot, i) => {
        plan += `<rect x="${m.lx}" y="${m.ly + i * 10 - 1}" width="3" height="3"/><text x="${m.lx + 6}" y="${m.ly + base[i]}" font-size="${corps[i]}">${mot}</text>`;
    });
    plan += "</g>";
});
document.getElementById("plan").innerHTML = plan;
```
